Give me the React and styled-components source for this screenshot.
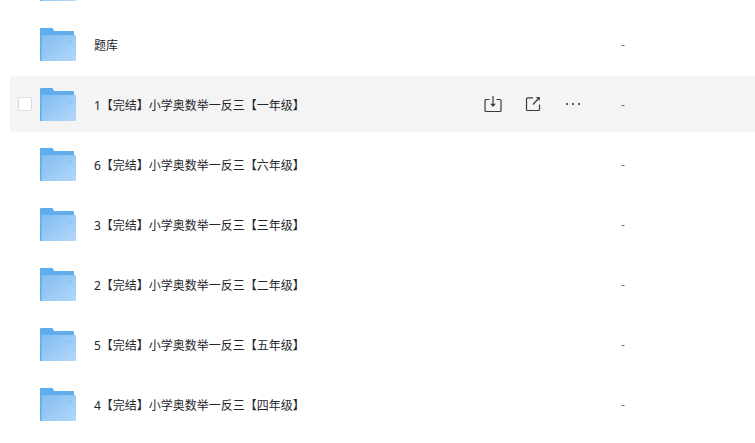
import React from 'react'
import styled, { createGlobalStyle } from 'styled-components'

const GlobalStyle = createGlobalStyle`
    html, body {
        margin: 0;
        padding: 0;
        height: 100%;
        background: #fff;
        overflow: hidden;
    }
`

const List = styled.div`
    width: 745px;
    height: 443px;
    margin: -44px 0 0 10px;
    display: flex;
    flex-direction: column;
    gap: 4px;
    font-family: "Noto Sans", "Noto Sans CJK SC", sans-serif;
    font-size: 12px;
    color: #25262b;
`

const Row = styled.div`
    flex: none;
    height: 56px;
    display: flex;
    align-items: center;
    padding-left: 8px;
    border-radius: 4px 0 0 4px;
    background: ${(p) => (p.$active ? '#f4f4f4' : 'transparent')};
`

const CheckBox = styled.span`
    flex: none;
    box-sizing: border-box;
    width: 14px;
    height: 14px;
    margin-right: 8px;
    background: #fff;
    border: 1px solid #dcdcdc;
    border-radius: 2px;
    visibility: ${(p) => (p.$show ? 'visible' : 'hidden')};
`

const FolderWrap = styled.div`
    flex: none;
    width: 36px;
    height: 33px;
    margin: 1px 18px 0 0;
    svg {
        display: block;
    }
`

const Name = styled.div`
    width: 390px;
    flex: none;
    padding-top: 1px;
    white-space: nowrap;
`

const Actions = styled.div`
    flex: none;
    width: 138px;
    display: flex;
    align-items: center;
    gap: 23px;
    color: #3a3a3a;
    svg {
        display: block;
    }
`

const Size = styled.div`
    margin-left: -1px;
    color: #6d6d6d;
`

const FolderIcon = ({ id }) => (
    <FolderWrap>
        <svg width="36" height="33" viewBox="0 0 36 33">
            <defs>
                <linearGradient id={id} x1="0" y1="0" x2="1" y2="1">
                    <stop offset="0" stopColor="#80bdf0" />
                    <stop offset="1" stopColor="#b3d7fb" />
                </linearGradient>
            </defs>
            <path d="M1 0h11.5l1.5 3H33a1 1 0 0 1 1 1v8H34v21H0V1a1 1 0 0 1 1-1z" fill="#5fadec" />
            <path d="M1.5 7H35a1 1 0 0 1 1 1v24a1 1 0 0 1-1 1H1.500z" fill={`url(#${id})`} />
            <path d="M27 12.500h5M27 14.500h5" stroke="#8cc2f2" strokeWidth="1" fill="none" />
        </svg>
    </FolderWrap>
)

const DownloadIcon = () => (
    <svg width="18" height="18" viewBox="0 0 18 18" fill="none" stroke="currentColor" strokeWidth="1.2">
        <path d="M5.500 4.500H2a1 1 0 0 0-1 1v10a1 1 0 0 0 1 1h14a1 1 0 0 0 1-1v-10a1 1 0 0 0-1-1h-3.500" />
        <path d="M9 1v9" />
        <path d="M6.200 8.800h5.600L9 12z" fill="currentColor" stroke="none" />
    </svg>
)

const ShareIcon = () => (
    <svg width="17" height="17" viewBox="0 0 17 17" fill="none" stroke="currentColor" strokeWidth="1.2">
        <path d="M8 1.800H2.500a1 1 0 0 0-1 1v10.700a1 1 0 0 0 1 1h11a1 1 0 0 0 1-1V8.500" />
        <path d="M8 8.500L13 3" />
        <path d="M10.800 1h4v4z" fill="currentColor" stroke="none" />
    </svg>
)

const MoreIcon = () => (
    <svg width="16" height="16" viewBox="0 0 16 16" fill="currentColor">
        <circle cx="2" cy="8" r="1.1" />
        <circle cx="8" cy="8" r="1.1" />
        <circle cx="14" cy="8" r="1.1" />
    </svg>
)

const rows = [
    { id: 'f0', name: '' },
    { id: 'f1', name: '题库' },
    { id: 'f2', name: '1【完结】小学奥数举一反三【一年级】', active: true },
    { id: 'f3', name: '6【完结】小学奥数举一反三【六年级】' },
    { id: 'f4', name: '3【完结】小学奥数举一反三【三年级】' },
    { id: 'f5', name: '2【完结】小学奥数举一反三【二年级】' },
    { id: 'f6', name: '5【完结】小学奥数举一反三【五年级】' },
    { id: 'f7', name: '4【完结】小学奥数举一反三【四年级】' },
]

const App = () => (
    <>
        <GlobalStyle />
        <List>
            {rows.map((row) => (
                <Row key={row.id} $active={row.active}>
                    <CheckBox $show={row.active} />
                    <FolderIcon id={row.id} />
                    <Name>{row.name}</Name>
                    <Actions>
                        {row.active && (
                            <>
                                <DownloadIcon />
                                <ShareIcon />
                                <MoreIcon />
                            </>
                        )}
                    </Actions>
                    {row.name && <Size>-</Size>}
                </Row>
            ))}
        </List>
    </>
)

export default App
